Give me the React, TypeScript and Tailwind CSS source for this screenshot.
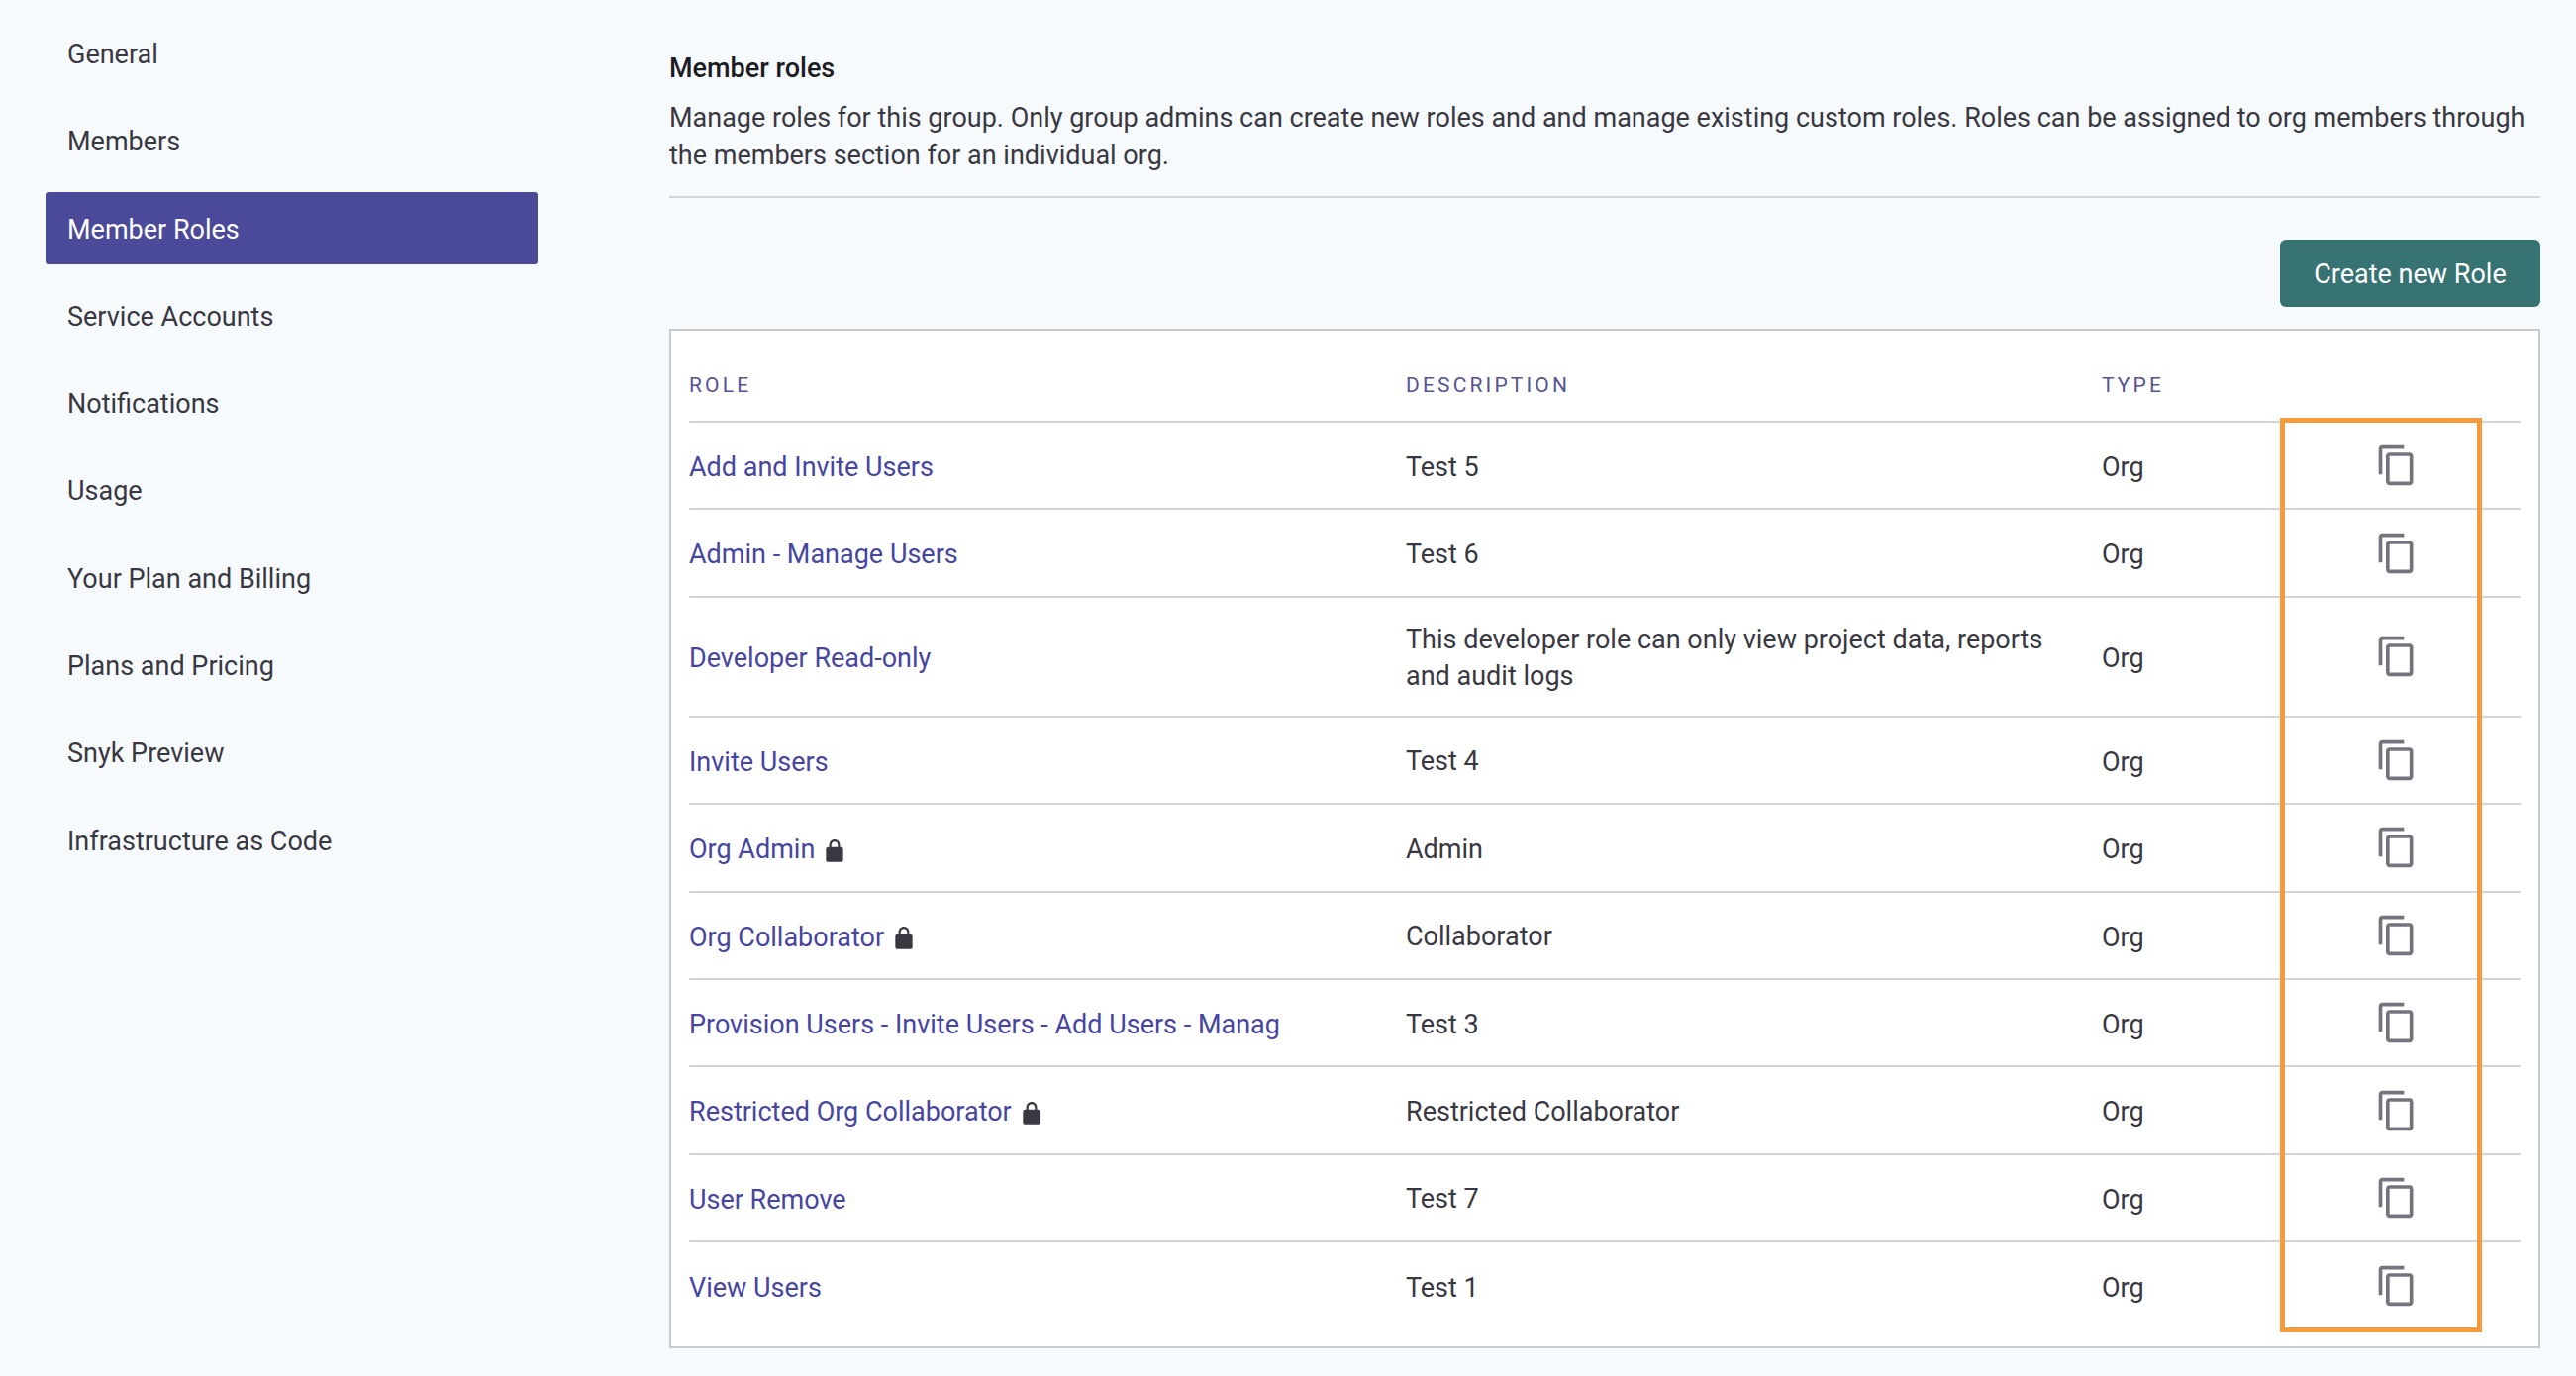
const nav = ["General","Members","Member Roles","Service Accounts","Notifications","Usage","Your Plan and Billing","Plans and Pricing","Snyk Preview","Infrastructure as Code"];

const rows: { name: string; desc: string[]; lock?: boolean; tall?: boolean }[] = [
  { name: "Add and Invite Users", desc: ["Test 5"] },
  { name: "Admin - Manage Users", desc: ["Test 6"] },
  { name: "Developer Read-only", desc: ["This developer role can only view project data, reports", "and audit logs"], tall: true },
  { name: "Invite Users", desc: ["Test 4"] },
  { name: "Org Admin", desc: ["Admin"], lock: true },
  { name: "Org Collaborator", desc: ["Collaborator"], lock: true },
  { name: "Provision Users - Invite Users - Add Users - Manag", desc: ["Test 3"] },
  { name: "Restricted Org Collaborator", desc: ["Restricted Collaborator"], lock: true },
  { name: "User Remove", desc: ["Test 7"] },
  { name: "View Users", desc: ["Test 1"] },
];

function CopyIcon() {
  return (
    <svg viewBox="0 0 24 24" className="w-[44px] h-[44px] fill-[#74747f]">
      <path d="M16 1H4c-1.1 0-2 .9-2 2v14h2V3h12V1zm3 4H8c-1.1 0-2 .9-2 2v14c0 1.1.9 2 2 2h11c1.1 0 2-.9 2-2V7c0-1.1-.9-2-2-2zm0 16H8V7h11v14z" />
    </svg>
  );
}

function LockIcon() {
  return (
    <svg viewBox="0 0 24 24" className="w-[26px] h-[26px] fill-[#393843] ml-[7px] mt-[3px]">
      <path d="M18 8h-1V6c0-2.76-2.24-5-5-5S7 3.24 7 6v2H6c-1.1 0-2 .9-2 2v10c0 1.1.9 2 2 2h12c1.1 0 2-.9 2-2V10c0-1.1-.9-2-2-2zM9 6c0-1.66 1.34-3 3-3s3 1.34 3 3v2H9V6z" />
    </svg>
  );
}

export default function App() {
  return (
    <div className="w-[2602px] h-[1390px] overflow-hidden flex bg-[#f6fafd] text-[27px] text-[#393842] font-['Roboto',sans-serif]">
      <nav className="w-[676px] shrink-0 pl-[46px] pt-[17.5px]">
        <ul className="w-[497px]">
          {nav.map((n) => (
            <li
              key={n}
              className={
                "h-[73px] mb-[15.33px] w-[497px] flex items-center pl-[22px] rounded-[3px] " +
                (n === "Member Roles" ? "bg-[#4b4a9a] text-white pt-[2px]" : "")
              }
            >
              <span className="relative top-[1px]">{n}</span>
            </li>
          ))}
        </ul>
      </nav>
      <main className="w-[1890px] shrink-0">
        <header className="pt-[52px] h-[200px] border-b-2 border-[#d3d3da]">
          <h1 className="font-medium text-[#1c1c24] leading-[34px]">Member roles</h1>
          <p className="leading-[38px] mt-[14px]">
            Manage roles for this group. Only group admins can create new roles and and manage existing custom roles. Roles can be assigned to org members through
            <br />
            the members section for an individual org.
          </p>
        </header>
        <div className="flex justify-end mt-[42px]">
          <button className="w-[263px] h-[68px] pt-[2px] rounded-[6px] bg-[#387373] text-white">Create new Role</button>
        </div>
        <section className="relative mt-[22px] h-[1030px] border-2 border-[#c9c9d2] bg-white px-[18px]">
          <div className="flex items-center h-[93px] pt-[21px] border-b-2 border-[#d3d3da] text-[21px] tracking-[0.15em] text-[#55548f]">
            <div className="w-[724px]">ROLE</div>
            <div className="w-[703px]">DESCRIPTION</div>
            <div>TYPE</div>
          </div>
          {rows.map((r, i) => (
            <div
              key={r.name}
              className={
                "flex items-center " +
                (r.tall ? "h-[121px] " : "h-[88.4px] ") +
                (i < rows.length - 1 ? "border-b-2 border-[#d3d3da]" : "")
              }
            >
              <div className="w-[724px] pt-[4px] flex items-center text-[#4645a0]">
                <span>{r.name}</span>
                {r.lock && <LockIcon />}
              </div>
              <div className="w-[703px] pt-[4px] leading-[37px]">
                {r.desc.map((d) => (
                  <div key={d}>{d}</div>
                ))}
              </div>
              <div className="w-[200px] pt-[4px]">Org</div>
              <div className="w-[196px] flex justify-center">
                <CopyIcon />
              </div>
            </div>
          ))}
          <div className="absolute left-[1625px] top-[88px] w-[204px] h-[924px] border-[5px] border-[#f59b3b] pointer-events-none" />
        </section>
      </main>
    </div>
  );
}
